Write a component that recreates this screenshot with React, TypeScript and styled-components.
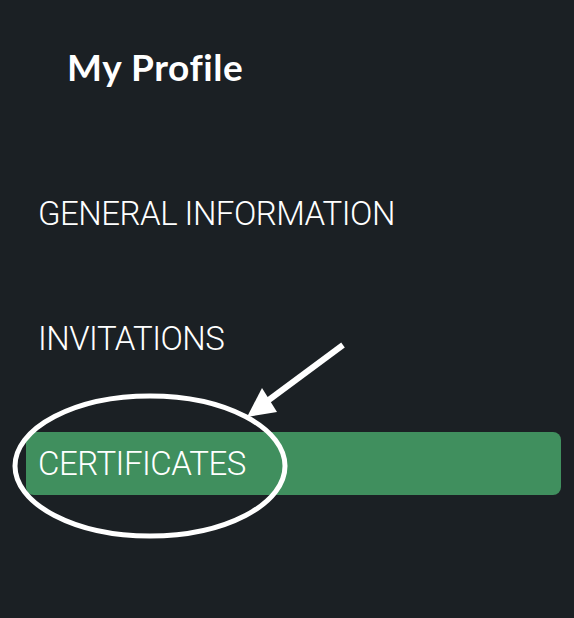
import React from "react";
import styled, { createGlobalStyle } from "styled-components";

const Global = createGlobalStyle`
  html, body { margin: 0; padding: 0; background: #1b2024; }
  #root { min-height: 618px; }
`;

const Sidebar = styled.nav`
  position: relative;
  box-sizing: border-box;
  width: 574px;
  height: 618px;
  background: #1b2024;
  padding: 43px 13px 0 26px;
  display: flex;
  flex-direction: column;
`;

const Title = styled.h1`
  margin: 0 0 0 41px;
  font-family: "Lato", "Open Sans", sans-serif;
  font-weight: 700;
  font-size: 37px;
  letter-spacing: 0.6px;
  line-height: 48px;
  color: #ffffff;
`;

const Menu = styled.ul`
  list-style: none;
  margin: 0;
  padding: 0;
  margin-top: 91px;
  display: flex;
  flex-direction: column;
  gap: 62px;
`;

const Item = styled.li<{ $active?: boolean }>`
  height: 63px;
  display: flex;
  align-items: center;
  padding-left: 12px;
  border-radius: 8px;
  background: ${(p) => (p.$active ? "#408f5e" : "transparent")};
  font-family: "Roboto", "Liberation Sans", sans-serif;
  font-weight: 300;
  font-size: 33px;
  color: #ffffff;
  letter-spacing: -0.5px;
`;

const Overlay = styled.svg`
  position: absolute;
  left: 0;
  top: 0;
  pointer-events: none;
`;

export default function App() {
  return (
    <>
      <Global />
      <Sidebar>
        <Title>My Profile</Title>
        <Menu>
          <Item>GENERAL INFORMATION</Item>
          <Item>INVITATIONS</Item>
          <Item $active>CERTIFICATES</Item>
        </Menu>
        <Overlay width="574" height="618" viewBox="0 0 574 618">
          <ellipse cx="150" cy="466" rx="135" ry="70" fill="none" stroke="#fff" strokeWidth="5" />
          <line x1="343" y1="345" x2="262" y2="405" stroke="#fff" strokeWidth="6" />
          <polygon points="247,417 262,388 277,412" fill="#fff" />
        </Overlay>
      </Sidebar>
    </>
  );
}
